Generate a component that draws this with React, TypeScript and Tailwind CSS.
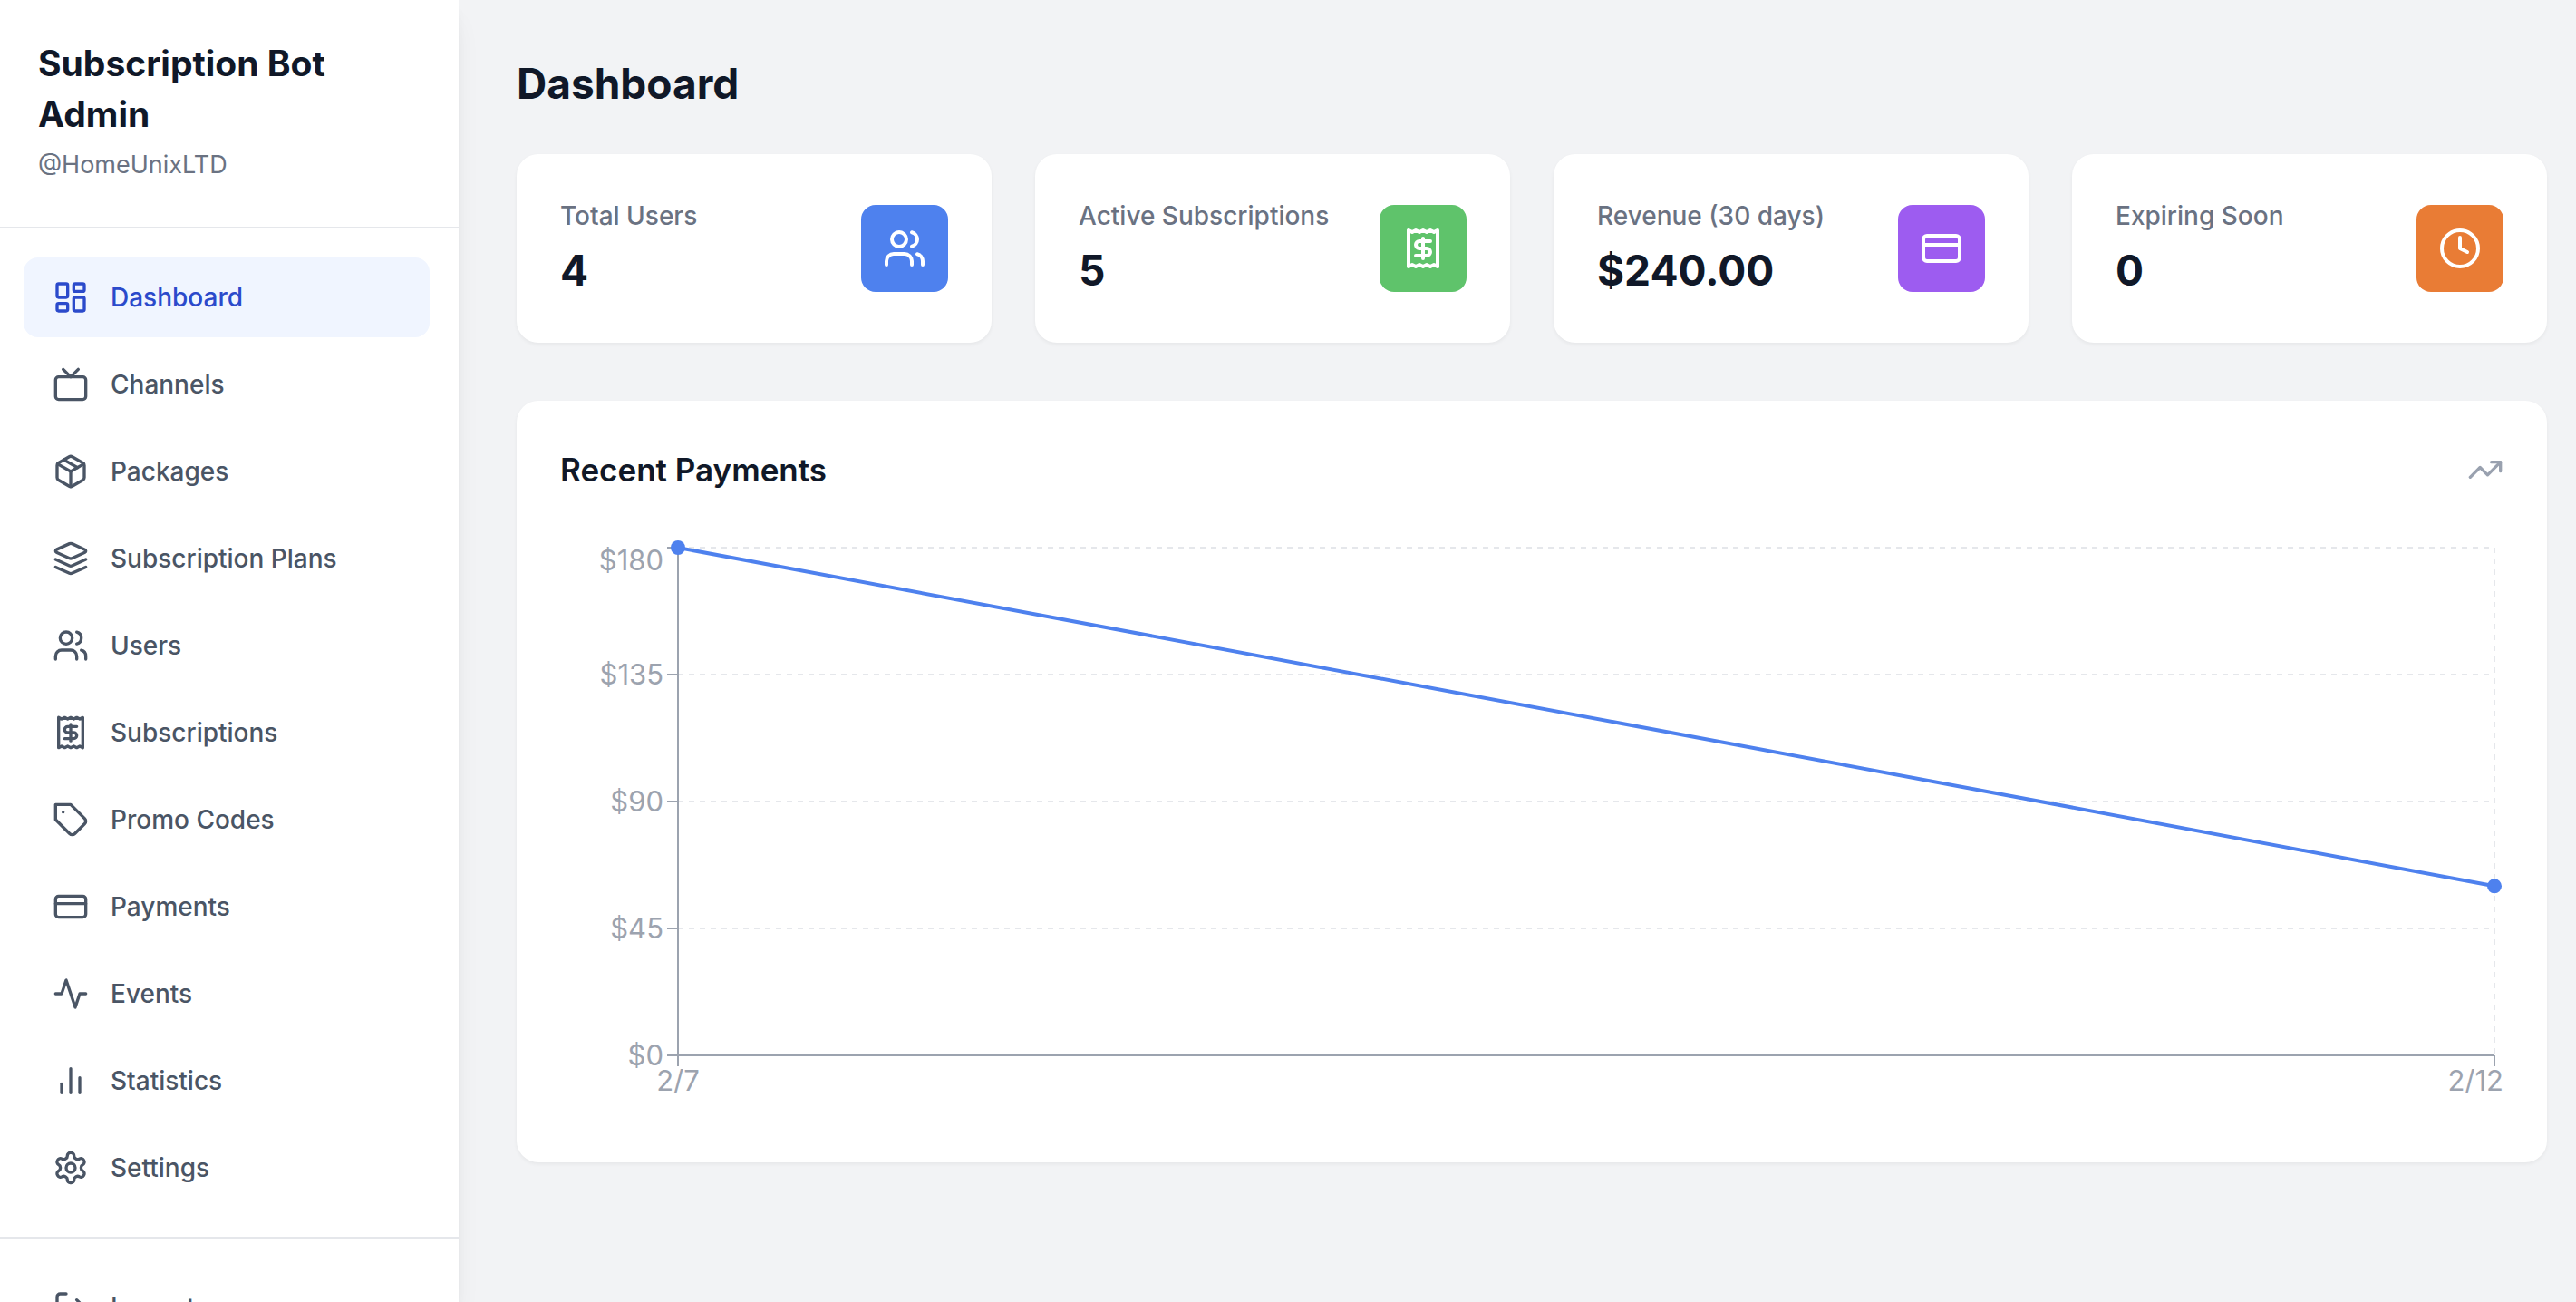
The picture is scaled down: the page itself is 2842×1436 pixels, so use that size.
import { useLayoutEffect, useRef, useState, type ReactElement, type ReactNode } from "react";
import { Clock, CreditCard, LayoutDashboard, LogOut, TrendingUp, Users, type LucideIcon } from "lucide-react";

type IconProps = { className?: string };

function Glyph({ className, children }: IconProps & { children: ReactNode }) {
  return (
    <svg
      className={className}
      viewBox="0 0 24 24"
      fill="none"
      stroke="currentColor"
      strokeWidth={2}
      strokeLinecap="round"
      strokeLinejoin="round"
      aria-hidden="true"
    >
      {children}
    </svg>
  );
}

function TvIcon({ className }: IconProps) {
  return (
    <Glyph className={className}>
      <rect width="20" height="15" x="2" y="7" rx="2" ry="2" />
      <polyline points="17 2 12 7 7 2" />
    </Glyph>
  );
}

function PackageIcon({ className }: IconProps) {
  return (
    <Glyph className={className}>
      <path d="m7.5 4.27 9 5.15" />
      <path d="M21 8a2 2 0 0 0-1-1.73l-7-4a2 2 0 0 0-2 0l-7 4A2 2 0 0 0 3 8v8a2 2 0 0 0 1 1.73l7 4a2 2 0 0 0 2 0l7-4A2 2 0 0 0 21 16Z" />
      <path d="m3.3 7 8.7 5 8.7-5" />
      <path d="M12 22V12" />
    </Glyph>
  );
}

function LayersIcon({ className }: IconProps) {
  return (
    <Glyph className={className}>
      <path d="m12.83 2.18a2 2 0 0 0-1.66 0L2.6 6.08a1 1 0 0 0 0 1.83l8.58 3.91a2 2 0 0 0 1.66 0l8.58-3.9a1 1 0 0 0 0-1.83Z" />
      <path d="m22 17.65-9.17 4.16a2 2 0 0 1-1.66 0L2 17.65" />
      <path d="m22 12.65-9.17 4.16a2 2 0 0 1-1.66 0L2 12.65" />
    </Glyph>
  );
}

function ReceiptIcon({ className }: IconProps) {
  return (
    <Glyph className={className}>
      <path d="M4 2v20l2-1 2 1 2-1 2 1 2-1 2 1 2-1 2 1V2l-2 1-2-1-2 1-2-1-2 1-2-1-2 1Z" />
      <path d="M16 8h-6a2 2 0 1 0 0 4h4a2 2 0 1 1 0 4H8" />
      <path d="M12 17.5v-11" />
    </Glyph>
  );
}

function TagIcon({ className }: IconProps) {
  return (
    <Glyph className={className}>
      <path d="M12 2H2v10l9.29 9.29c.94.94 2.48.94 3.42 0l6.58-6.58c.94-.94.94-2.48 0-3.42L12 2Z" />
      <path d="M7 7h.01" />
    </Glyph>
  );
}

function ActivityIcon({ className }: IconProps) {
  return (
    <Glyph className={className}>
      <path d="M22 12h-4l-3 9L9 3l-3 9H2" />
    </Glyph>
  );
}

function BarsIcon({ className }: IconProps) {
  return (
    <Glyph className={className}>
      <line x1="18" x2="18" y1="20" y2="10" />
      <line x1="12" x2="12" y1="20" y2="4" />
      <line x1="6" x2="6" y1="20" y2="14" />
    </Glyph>
  );
}

function GearIcon({ className }: IconProps) {
  return (
    <Glyph className={className}>
      <path d="M12.22 2h-.44a2 2 0 0 0-2 2v.18a2 2 0 0 1-1 1.73l-.43.25a2 2 0 0 1-2 0l-.15-.08a2 2 0 0 0-2.73.73l-.22.38a2 2 0 0 0 .73 2.73l.15.1a2 2 0 0 1 1 1.72v.51a2 2 0 0 1-1 1.74l-.15.09a2 2 0 0 0-.73 2.73l.22.38a2 2 0 0 0 2.73.73l.15-.08a2 2 0 0 1 2 0l.43.25a2 2 0 0 1 1 1.73V20a2 2 0 0 0 2 2h.44a2 2 0 0 0 2-2v-.18a2 2 0 0 1 1-1.73l.43-.25a2 2 0 0 1 2 0l.15.08a2 2 0 0 0 2.73-.73l.22-.39a2 2 0 0 0-.73-2.73l-.15-.08a2 2 0 0 1-1-1.74v-.5a2 2 0 0 1 1-1.74l.15-.09a2 2 0 0 0 .73-2.73l-.22-.38a2 2 0 0 0-2.73-.73l-.15.08a2 2 0 0 1-2 0l-.43-.25a2 2 0 0 1-1-1.73V4a2 2 0 0 0-2-2z" />
      <circle cx="12" cy="12" r="3" />
    </Glyph>
  );
}

type AnyIcon = LucideIcon | ((props: IconProps) => ReactElement);

const navItems: { label: string; icon: AnyIcon }[] = [
  { label: "Dashboard", icon: LayoutDashboard },
  { label: "Channels", icon: TvIcon },
  { label: "Packages", icon: PackageIcon },
  { label: "Subscription Plans", icon: LayersIcon },
  { label: "Users", icon: Users },
  { label: "Subscriptions", icon: ReceiptIcon },
  { label: "Promo Codes", icon: TagIcon },
  { label: "Payments", icon: CreditCard },
  { label: "Events", icon: ActivityIcon },
  { label: "Statistics", icon: BarsIcon },
  { label: "Settings", icon: GearIcon },
];

const stats: { label: string; value: string; icon: AnyIcon; color: string }[] = [
  { label: "Total Users", value: "4", icon: Users, color: "bg-[#4e81ee]" },
  { label: "Active Subscriptions", value: "5", icon: ReceiptIcon, color: "bg-[#5fc36b]" },
  { label: "Revenue (30 days)", value: "$240.00", icon: CreditCard, color: "bg-[#9d5cf0]" },
  { label: "Expiring Soon", value: "0", icon: Clock, color: "bg-[#e97c35]" },
];

const payments = [
  { date: "2/7", amount: 180 },
  { date: "2/12", amount: 60 },
];
const yTicks = [0, 45, 90, 135, 180];

function Sidebar() {
  return (
    <aside className="z-10 flex h-screen w-[506px] shrink-0 flex-col overflow-hidden bg-white shadow-[0_20px_30px_-6px_rgba(0,0,0,0.07),0_8px_12px_-4px_rgba(0,0,0,0.07)]">
      <div className="shrink-0 border-b-2 border-gray-200 pt-[42px] pr-12 pb-12 pl-[42px]">
        <h1 className="text-[39px] leading-14 font-bold text-gray-900">Subscription Bot Admin</h1>
        <p className="mt-2 text-[27px] leading-10 text-gray-500">@HomeUnixLTD</p>
      </div>
      <nav className="flex shrink-0 flex-col gap-2 py-8 pr-8 pl-[26px]">
        {navItems.map(({ label, icon: Icon }, i) => (
          <a
            key={label}
            href="#"
            aria-current={i === 0 ? "page" : undefined}
            className={
              i === 0
                ? "flex items-center gap-6 rounded-2xl bg-[#f0f5ff] px-8 py-6 text-[28px] leading-10 font-medium text-[#2b4acb]"
                : "flex items-center gap-6 rounded-2xl px-8 py-6 text-[28px] leading-10 font-medium text-gray-600"
            }
          >
            <Icon className="size-10 shrink-0" />
            {label}
          </a>
        ))}
      </nav>
      <div className="shrink-0 border-t-2 border-gray-200 py-8 pr-8 pl-[26px]">
        <button type="button" className="flex w-full items-center gap-6 rounded-2xl px-8 py-6 text-[28px] leading-10 font-medium text-gray-600">
          <LogOut className="size-10 shrink-0" />
          Logout
        </button>
      </div>
    </aside>
  );
}

function PaymentsChart() {
  const ref = useRef<HTMLDivElement>(null);
  const [width, setWidth] = useState(0);

  useLayoutEffect(() => {
    const el = ref.current;
    if (!el) return;
    const update = () => setWidth(el.clientWidth);
    update();
    const observer = new ResizeObserver(update);
    observer.observe(el);
    return () => observer.disconnect();
  }, []);

  const left = 130;
  const right = width - 10;
  const top = 10;
  const bottom = 570;
  const y = (v: number) => bottom - (v / 180) * (bottom - top);
  const x = (i: number) => left + (i / (payments.length - 1)) * (right - left);

  return (
    <div ref={ref} className="h-[640px] w-full">
      {width > 0 && (
        <svg width={width} height={640} role="img" aria-label="Recent payments line chart" className="block text-[31px]">
          <g stroke="#e5e7eb" strokeWidth={2} strokeDasharray="6 6">
            {yTicks.map((t) => (
              <line key={t} x1={left} x2={right} y1={y(t)} y2={y(t)} />
            ))}
            {payments.map((p, i) => (
              <line key={p.date} x1={x(i)} x2={x(i)} y1={top} y2={bottom} />
            ))}
          </g>
          <g stroke="#9ca3af" strokeWidth={2}>
            <line x1={left} x2={right} y1={bottom} y2={bottom} />
            <line x1={left} x2={left} y1={top} y2={bottom} />
            {yTicks.map((t) => (
              <line key={t} x1={left - 12} x2={left} y1={y(t)} y2={y(t)} />
            ))}
            {payments.map((p, i) => (
              <line key={p.date} x1={x(i)} x2={x(i)} y1={bottom} y2={bottom + 12} />
            ))}
          </g>
          <g fill="#9ca3af">
            {yTicks.map((t) => (
              <text key={t} x={left - 16} y={Math.max(y(t), 24) + 11} textAnchor="end">
                {`$${t}`}
              </text>
            ))}
            <text x={left} y={609} textAnchor="middle">
              {payments[0].date}
            </text>
            <text x={width} y={609} textAnchor="end">
              {payments[1].date}
            </text>
          </g>
          <polyline
            points={payments.map((p, i) => `${x(i)},${y(p.amount)}`).join(" ")}
            fill="none"
            stroke="#4e81ee"
            strokeWidth={4}
          />
          {payments.map((p, i) => (
            <circle key={p.date} cx={x(i)} cy={y(p.amount)} r={8} fill="#4e81ee" />
          ))}
        </svg>
      )}
    </div>
  );
}

export default function App() {
  return (
    <div className="flex h-screen overflow-hidden bg-[#f2f3f5] font-['Inter',sans-serif]">
      <Sidebar />
      <main className="min-w-0 flex-1 pt-15 pr-8 pl-16">
        <h2 className="mb-[46px] text-[46px] leading-16 font-bold text-gray-900">Dashboard</h2>
        <div className="mb-16 grid grid-cols-4 gap-12">
          {stats.map(({ label, value, icon: Icon, color }) => (
            <div key={label} className="flex items-center justify-between rounded-3xl bg-white p-12 shadow-[0_2px_4px_rgba(0,0,0,0.05)]">
              <div>
                <p className="text-[28px] leading-10 font-medium text-gray-500">{label}</p>
                <p className="mt-2 text-[46px] leading-16 font-bold text-gray-900">{value}</p>
              </div>
              <div className={`rounded-2xl p-6 text-white ${color}`}>
                <Icon className="size-12" />
              </div>
            </div>
          ))}
        </div>
        <section className="rounded-3xl bg-white p-12 shadow-[0_2px_4px_rgba(0,0,0,0.05)]">
          <div className="mb-12 flex items-center justify-between">
            <h3 className="text-[35px] leading-14 font-semibold text-gray-900">Recent Payments</h3>
            <TrendingUp className="size-10 text-gray-400" />
          </div>
          <PaymentsChart />
        </section>
      </main>
    </div>
  );
}
